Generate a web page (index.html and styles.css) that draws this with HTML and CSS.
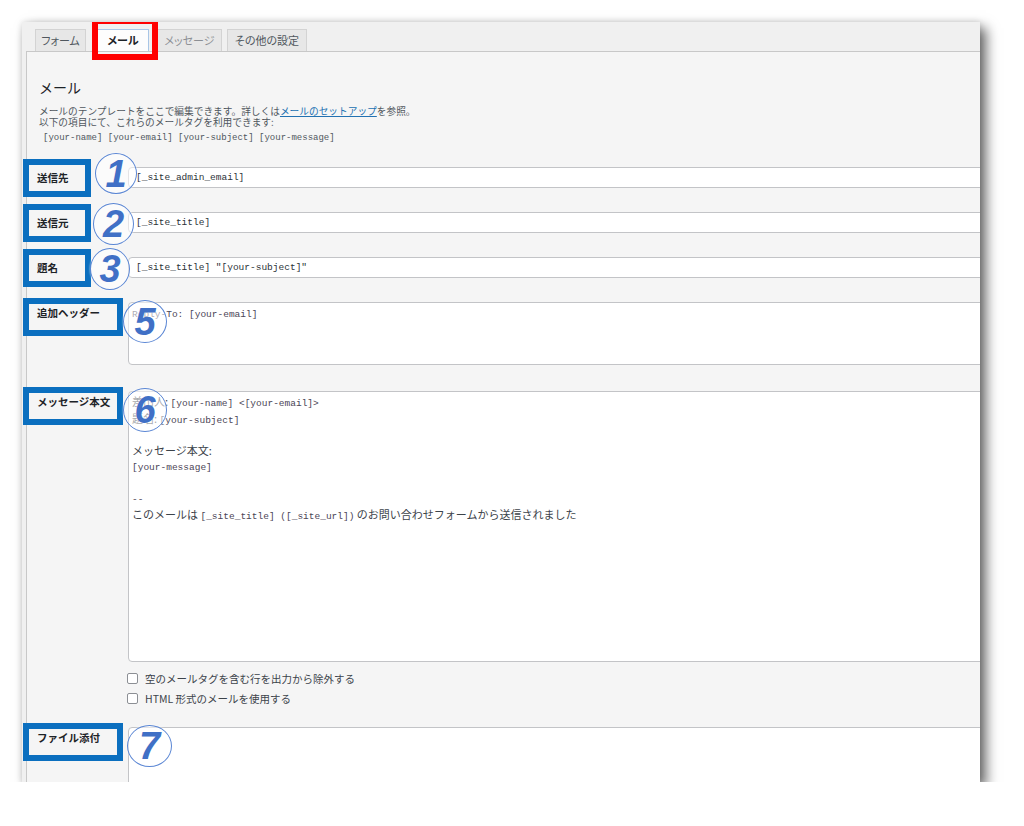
FILE: index.html
```html
<!DOCTYPE html>
<html lang="ja">
<head>
<meta charset="utf-8">
<title>メール設定</title>
<link rel="stylesheet" href="styles.css">
</head>
<body>
<div class="page">
  <div class="card">
    <nav class="tabs">
      <span class="tab tab-form">フォーム</span>
      <span class="tab tab-active">メール</span>
      <span class="tab tab-msg">メッセージ</span>
      <span class="tab tab-other">その他の設定</span>
    </nav>
    <section class="panel">
      <h2 class="title">メール</h2>
      <p class="desc">メールのテンプレートをここで編集できます。詳しくは<a href="#">メールのセットアップ</a>を参照。<br>以下の項目にて、これらのメールタグを利用できます:</p>
      <p class="taglist">[your-name] [your-email] [your-subject] [your-message]</p>
      <div class="rows">
        <div class="row">
          <div class="label"><span class="mark">送信先</span></div>
          <div class="field"><div class="input">[_site_admin_email]</div></div>
          <span class="num n1">1</span>
        </div>
        <div class="row">
          <div class="label"><span class="mark">送信元</span></div>
          <div class="field"><div class="input">[_site_title]</div></div>
          <span class="num n2">2</span>
        </div>
        <div class="row">
          <div class="label"><span class="mark">題名</span></div>
          <div class="field"><div class="input">[_site_title] "[your-subject]"</div></div>
          <span class="num n3">3</span>
        </div>
        <div class="row row-top row-header">
          <div class="label"><span class="mark mark-long">追加ヘッダー</span></div>
          <div class="field"><div class="area area-header"><span class="mt">Reply-To: [your-email]</span></div></div>
          <span class="num n5">5</span>
        </div>
        <div class="row row-top row-body">
          <div class="label"><span class="mark mark-long">メッセージ本文</span></div>
          <div class="field">
            <div class="area area-body">差出人: <span class="mt">[your-name] &lt;[your-email]&gt;</span>
題名: <span class="mt">[your-subject]</span>

メッセージ本文:
<span class="mt">[your-message]</span>

<span class="mt">--</span>
このメールは <span class="mt">[_site_title] ([_site_url])</span> のお問い合わせフォームから送信されました</div>
            <div class="checks">
              <label class="check"><span class="box"></span>空のメールタグを含む行を出力から除外する</label>
              <label class="check"><span class="box"></span>HTML 形式のメールを使用する</label>
            </div>
          </div>
          <span class="num n6">6</span>
        </div>
        <div class="row row-top row-file">
          <div class="label"><span class="mark mark-long">ファイル添付</span></div>
          <div class="field"><div class="area area-file"></div></div>
          <span class="num n7">7</span>
        </div>
      </div>
    </section>
  </div>
</div>
</body>
</html>
```

FILE: styles.css
```css
* { box-sizing: border-box; }
html, body { margin: 0; background: #ffffff; }
body {
  font-family: "Noto Sans CJK JP", "Noto Sans", sans-serif;
  color: #3c434a;
}
.page { padding: 22px 44px 0 22px; }
.card {
  width: 958px;
  height: 760px;
  overflow: hidden;
  background: #f0f0f0;
  box-shadow: 6px 6px 12px rgba(0, 0, 0, 0.6), 0 0 6px rgba(0, 0, 0, 0.12);
}

/* tabs */
.tabs {
  display: flex;
  align-items: flex-end;
  height: 29px;
  padding-left: 13px;
}
.tab {
  height: 22px;
  padding: 0;
  text-align: center;
  line-height: 21px;
  font-size: 11px;
  font-feature-settings: "palt";
  color: #50575e;
  background: #e7e7e7;
  border: 1px solid #d3d3d3;
  border-bottom: none;
  margin-right: 5px;
}
.tab-form { width: 51px; }
.tab-msg { width: 65px; color: #8c8f94; }
.tab-other { width: 80px; }
.tab-active {
  position: relative;
  width: 52px;
  margin-left: 6px;
  margin-right: 8px;
  background: #fdfdfd;
  border-color: #a9c6e6;
  color: #1d2327;
  font-weight: 700;
}
.tab-active::after {
  content: "";
  position: absolute;
  left: -6px;
  top: -12px;
  right: -10px;
  bottom: -9px;
  border: 6px solid #ff0000;
}

/* panel */
.panel {
  background: #f5f5f5;
  border-top: 1px solid #c8c8c8;
  border-left: 1px solid #c8c8c8;
  margin-left: 4px;
  margin-right: -40px;
  height: 731px;
}
.title {
  margin: 26px 0 0 12px;
  font-size: 14px;
  line-height: 18px;
  font-weight: 400;
  color: #1d2327;
}
.desc {
  margin: 10px 0 0 12px;
  font-size: 9.7px;
  line-height: 11px;
  color: #50575e;
}
.desc a { color: #2271b1; text-decoration: underline; }
.taglist {
  margin: 4px 0 0 16px;
  font-family: "Liberation Mono", monospace;
  font-size: 9px;
  line-height: 12px;
  color: #50575e;
}

/* rows */
.rows { margin-top: 11px; }
.row {
  position: relative;
  display: grid;
  grid-template-columns: 101px 1fr;
  align-items: center;
  padding: 12px 20px 12px 0;
}
.row-top { align-items: start; }
.row-header { padding-bottom: 14px; }
.row-body { padding-bottom: 7px; }
.label { display: flex; align-items: center; }
.mark {
  display: flex;
  align-items: center;
  width: 68px;
  height: 38px;
  margin: -9px 0 -9px -4px;
  padding-left: 8px;
  border: 6px solid #0b6fbf;
  font-size: 10.5px;
  font-weight: 700;
  color: #1d2327;
}
.mark-long {
  width: 100px;
  align-items: flex-start;
  padding-top: 2px;
  line-height: 14px;
  margin: -4px 0 0 -4px;
}
.input {
  height: 21px;
  padding: 0 7px;
  background: #ffffff;
  border: 1px solid #c3c4c7;
  border-radius: 4px;
  font-family: "Liberation Mono", monospace;
  font-size: 9.5px;
  line-height: 19px;
  color: #2c3338;
  white-space: pre;
}
.area {
  background: #ffffff;
  border: 1px solid #c3c4c7;
  border-radius: 4px;
  padding: 2px 3px;
  font-size: 11px;
  line-height: 15px;
  color: #3c434a;
  white-space: pre-wrap;
}
.mt {
  font-family: "Liberation Mono", monospace;
  font-size: 9.5px;
  color: #4b4556;
}
.area-header { height: 63px; }
.area-body { height: 271px; }
.area-file { height: 100px; }

.checks { margin-top: 6px; }
.check {
  display: flex;
  align-items: center;
  height: 20px;
  font-size: 10.5px;
  color: #3c434a;
}
.box {
  width: 11px;
  height: 11px;
  margin-left: -1px;
  margin-right: 7px;
  background: #ffffff;
  border: 1px solid #8c8f94;
  border-radius: 2px;
}

/* numbered circle annotations */
.num {
  position: absolute;
  display: flex;
  align-items: center;
  justify-content: center;
  border-radius: 50%;
  border: 1.5px solid #5a86d4;
  background: rgba(255, 255, 255, 0.55);
  box-shadow: 0 0 2px rgba(255, 255, 255, 0.9);
  font-family: "Liberation Sans", sans-serif;
  font-style: italic;
  font-weight: 700;
  font-size: 38px;
  line-height: 1;
  color: #4070c6;
  text-shadow: 0 0 1px #ffffff;
}
.n1 { left: 68px; top: -2px; width: 42px; height: 41px; }
.n2 { left: 66px; top: 3px; width: 41px; height: 42px; }
.n3 { left: 63px; top: 3px; width: 40px; height: 42px; }
.n5 { left: 96px; top: 10px; width: 44px; height: 43px; }
.n6 { left: 96px; top: 9px; width: 44px; height: 44px; }
.n7 { left: 100px; top: 10px; width: 45px; height: 42px; }
```
